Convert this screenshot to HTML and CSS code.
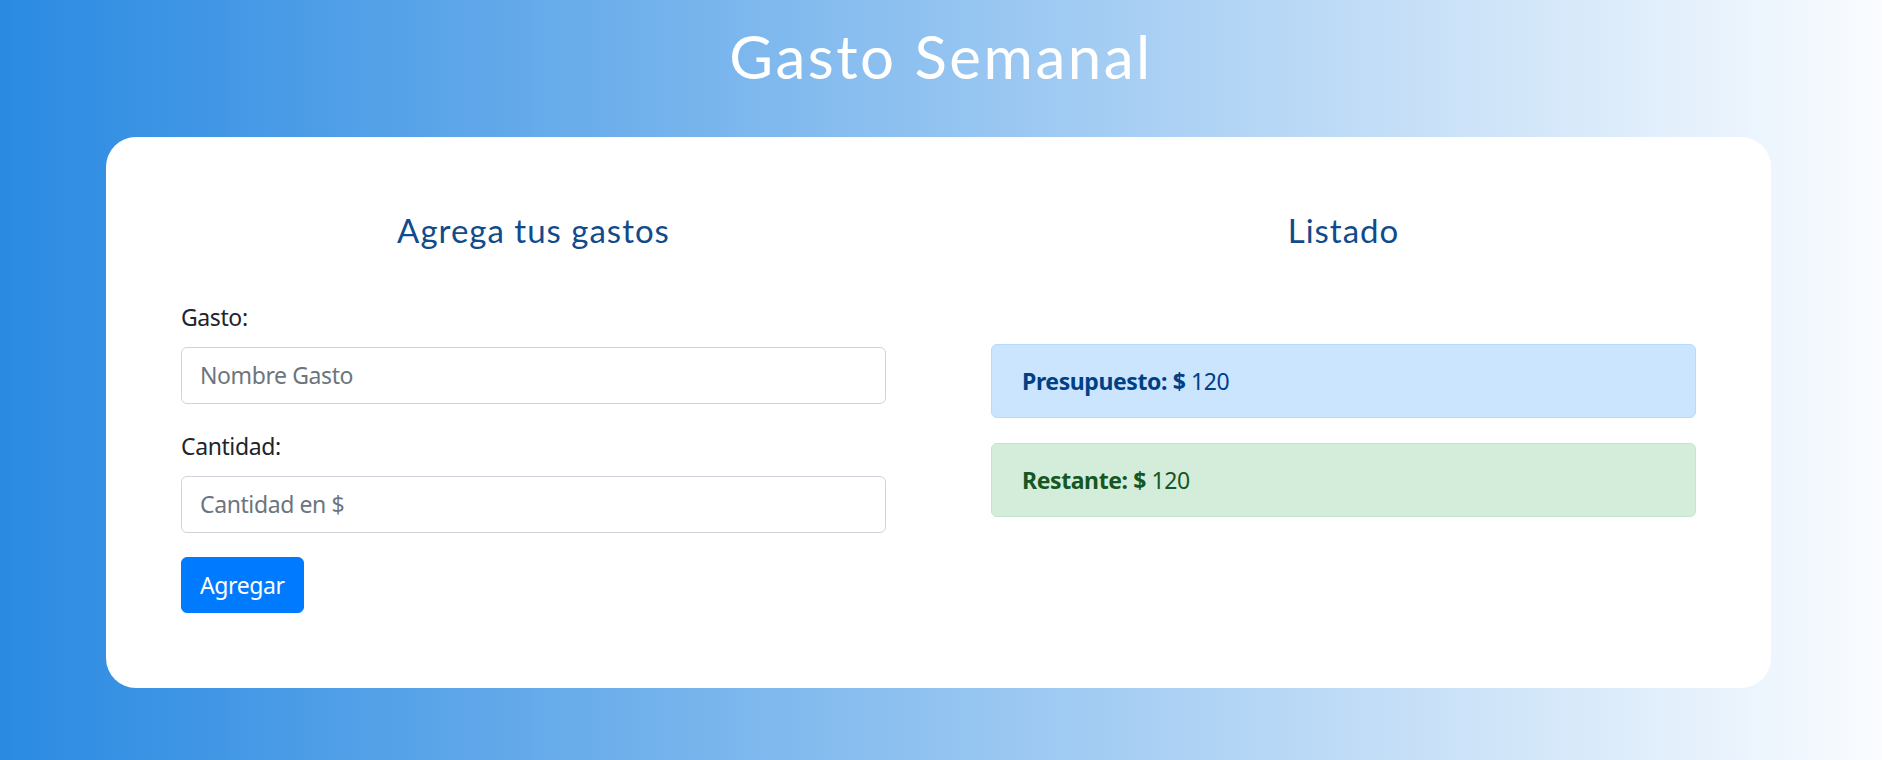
FILE: index.html
```html
<!DOCTYPE html>
<html lang="es">
<head>
<meta charset="utf-8">
<title>Gasto Semanal</title>
<link rel="stylesheet" href="styles.css">
</head>
<body>
  <header class="header">
    <h1 class="title">Gasto Semanal</h1>
  </header>
  <main class="card">
    <section class="col">
      <h2 class="col-title">Agrega tus gastos</h2>
      <form class="form">
        <div class="form-group">
          <label class="label" for="gasto">Gasto:</label>
          <input class="input" id="gasto" type="text" placeholder="Nombre Gasto">
        </div>
        <div class="form-group">
          <label class="label" for="cantidad">Cantidad:</label>
          <input class="input" id="cantidad" type="text" placeholder="Cantidad en $">
        </div>
        <button class="btn" type="button">Agregar</button>
      </form>
    </section>
    <section class="col">
      <h2 class="col-title">Listado</h2>
      <div class="alerts">
        <div class="alert alert-primary"><strong>Presupuesto: $</strong> 120</div>
        <div class="alert alert-success"><strong>Restante: $</strong> 120</div>
      </div>
    </section>
  </main>
</body>
</html>
```
FILE: styles.css
```css
* { box-sizing: border-box; }

html, body { height: 100%; }

body {
  margin: 0;
  min-height: 760px;
  background: linear-gradient(to right, #2a8ae2 0%, #fafcff 100%);
  font-family: "Noto Sans", "Open Sans", sans-serif;
  font-size: 23px;
  letter-spacing: -0.4px;
  line-height: 1.5;
  color: #212529;
  overflow: hidden;
}

.header {
  padding-top: 20px;
  text-align: center;
}

.title {
  margin: 0;
  font-family: Lato, "Noto Sans", sans-serif;
  font-weight: 400;
  font-size: 60px;
  letter-spacing: 2.5px;
  line-height: 1.2;
  color: #ffffff;
}

.card {
  margin: 45px 111px 0 106px;
  background: #ffffff;
  border-radius: 30px;
  padding: 74px 75px 75px;
  display: grid;
  grid-template-columns: 1fr 1fr;
  column-gap: 105px;
}

.col-title {
  margin: 0 0 48px;
  text-align: center;
  font-family: Lato, "Noto Sans", sans-serif;
  font-weight: 400;
  font-size: 33px;
  letter-spacing: 1px;
  line-height: 1.2;
  color: #104b8c;
}

.form-group {
  margin-bottom: 24px;
}

.label {
  display: block;
  margin-bottom: 12px;
  line-height: 36px;
}

.input {
  display: block;
  width: 100%;
  height: 57px;
  padding: 9px 18px;
  font-family: inherit;
  font-size: 23px;
  letter-spacing: -0.4px;
  line-height: 36px;
  color: #495057;
  background: #ffffff;
  border: 1.5px solid #ced4da;
  border-radius: 6px;
}

.input::placeholder {
  color: #6c757d;
  opacity: 1;
}

.btn {
  display: inline-block;
  padding: 9px 18px;
  font-family: inherit;
  font-size: 23px;
  letter-spacing: -0.4px;
  line-height: 36px;
  color: #ffffff;
  background: #007bff;
  border: 1.5px solid #007bff;
  border-radius: 6px;
}

.alerts {
  padding-top: 45px;
  display: flex;
  flex-direction: column;
  gap: 25px;
}

.alert {
  padding: 18px 30px;
  border: 1.5px solid transparent;
  border-radius: 6px;
  line-height: 36px;
}

.alert strong { font-weight: 700; }

.alert-primary {
  color: #004085;
  background: #cce5ff;
  border-color: #b8daff;
}

.alert-success {
  color: #155724;
  background: #d4edda;
  border-color: #c3e6cb;
}
```
